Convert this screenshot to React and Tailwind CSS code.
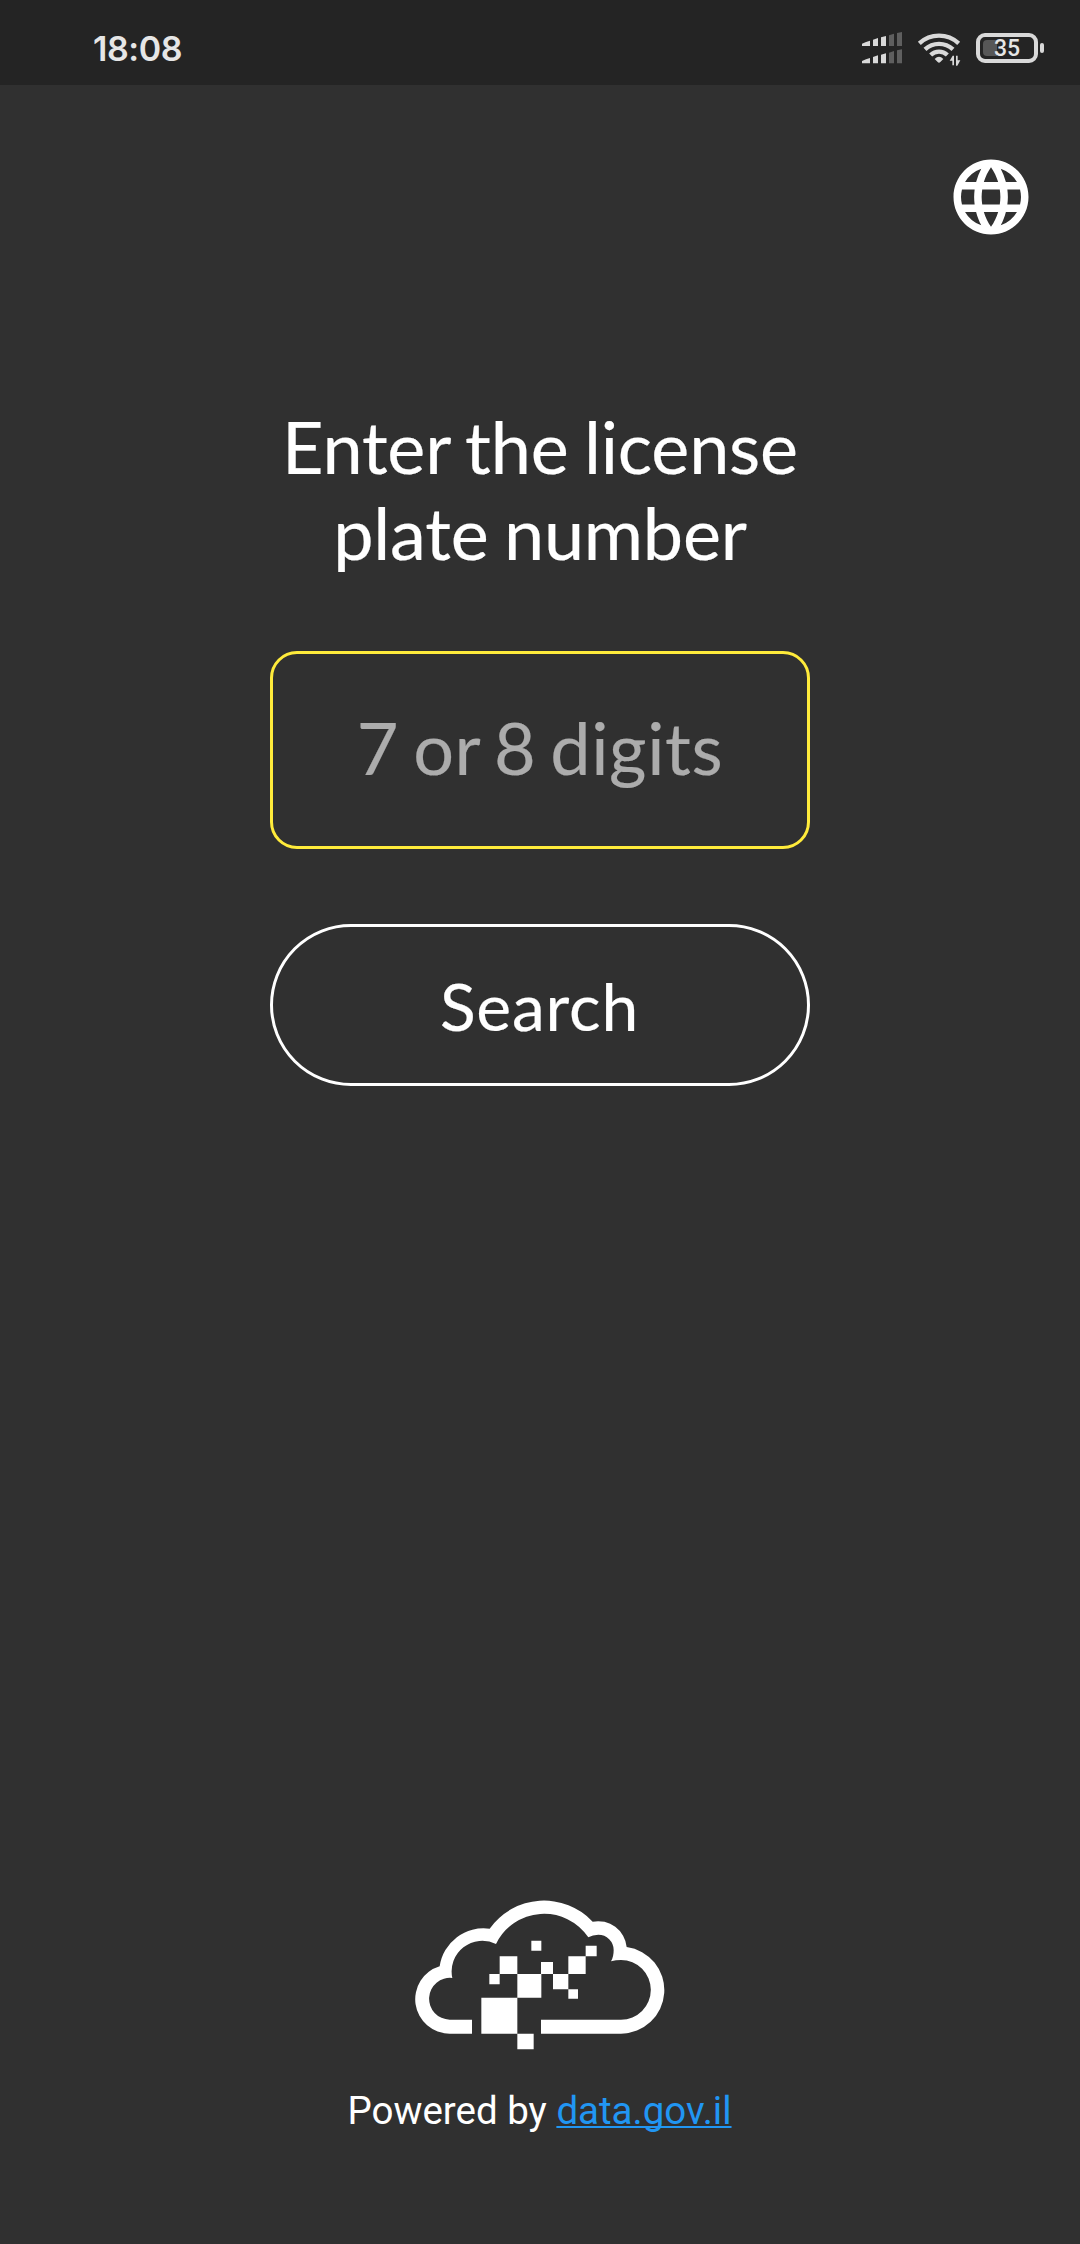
import { MdLanguage } from "react-icons/md";

function SignalIcon() {
  return (
    <svg className="h-8 w-[40px] overflow-visible" viewBox="66 68 120 96" fill="#d9d9d9">
      {[0, 52].map((dy) => (
        <g key={dy} transform={`translate(0 ${dy})`}>
          <path d="M66 110V103Q78 97 90 94V110ZM99 110V91L114 86V110ZM123 110V84L138 80V110Z" />
          <path fill="#5f5f5f" d="M147 110V78L162 73V110ZM171 110V71L186 68V110Z" />
        </g>
      ))}
    </svg>
  );
}

function WifiIcon() {
  return (
    <svg className="h-[34px] w-[43px] overflow-visible" viewBox="234 67 129 102" fill="none" stroke="#d9d9d9" strokeWidth="13">
      <path d="M238 101A87 87 0 0 1 356 101" />
      <path d="M255 119A62 62 0 0 1 339 119" />
      <path d="M272 136A36 36 0 0 1 322 136" />
      <path d="M284 148Q297 134 310 148L301 157Q297 161 293 157Z" fill="#d9d9d9" stroke="none" />
      <path d="M329 153L338 138H342V167H337V153ZM361 152L352 168H348V138H353V152Z" fill="#d9d9d9" stroke="none" />
    </svg>
  );
}

function Battery() {
  return (
    <div className="mt-px flex items-center gap-[2px]">
      <div className="relative flex h-[30px] w-[62px] items-center justify-center rounded-[9px] border-4 border-[#d9d9d9]">
        <div className="absolute left-[3px] top-[3px] h-4 w-[14px] rounded-l-[4px] bg-[#575757]" />
        <span className="relative pt-px font-['Roboto',sans-serif] text-[23px] font-medium leading-none text-[#e6e6e6]">35</span>
      </div>
      <div className="h-[10px] w-1 rounded-[2px] bg-[#d9d9d9]" />
    </div>
  );
}

function CloudLogo() {
  return (
    <svg className="h-[150px] w-[250px]" viewBox="47 62 750 450" fill="#fff">
      <path d="M218 463H151A103.2 103.2 0 0 1 121 261A133 133 0 0 1 271 148A200 200 0 0 1 580 127A86 86 0 0 1 682 203A130.6 130.6 0 0 1 665 463H425V421H665A89.5 89.5 0 0 0 665 242Q650 242 635 246Q643 233 643 212A46 46 0 0 0 597 166Q580 166 567 174A160 160 0 0 0 290 194A92 92 0 0 0 159 296A62.7 62.7 0 1 0 151 421H218Z" />
      <path d="M246 355H354V463H246ZM354 463H403V510H354ZM354 284H426V355H354ZM301 231H354V284H301ZM270 284H301V315H270ZM396 184H426V214H396ZM425 248H461V284H425ZM461 284H507V330H461ZM507 231H559V284H507ZM507 330H536V358H507ZM559 199H592V231H559Z" />
    </svg>
  );
}

export default function App() {
  return (
    <div className="flex h-[2244px] w-[1080px] flex-col bg-[#303030] font-['Lato',sans-serif] text-white">
      <header className="flex h-[85px] shrink-0 items-start justify-between bg-[#242424] pl-[93px] pr-9 pt-[32px]">
        <span className="font-['Inter',sans-serif] text-[34px] font-semibold leading-[34px] tracking-[-0.4px] text-[#e6e6e6]">18:08</span>
        <div className="flex items-start gap-[15px]">
          <div className="flex items-start gap-4">
            <SignalIcon />
            <WifiIcon />
          </div>
          <Battery />
        </div>
      </header>
      <div className="flex justify-end pr-11 pt-[67px]">
        <button aria-label="Language">
          <MdLanguage className="size-[90px]" />
        </button>
      </div>
      <main className="mx-auto mt-[161px] flex w-[540px] flex-col items-center">
        <h1 className="text-center text-[72px] leading-[86px] tracking-[-0.2px] [-webkit-text-stroke:0.2px] [word-spacing:-2.8px]">
          Enter the license
          <br />
          plate number
        </h1>
        <input
          className="mt-[76px] h-[198px] w-full rounded-[27px] border-[3px] border-[#ffeb3b] bg-transparent pb-[6px] text-center text-[72px] tracking-[0.6px] outline-none [-webkit-text-stroke:0.2px] [word-spacing:-5px] placeholder:text-[#acacac]"
          placeholder="7 or 8 digits"
        />
        <button className="mt-[75px] h-[162px] w-full rounded-full border-[3px] border-white pr-px pt-[2px] text-[66px] leading-none tracking-[0.8px] [-webkit-text-stroke:0.2px]">
          Search
        </button>
      </main>
      <footer className="mt-auto flex flex-col items-center pb-[110px]">
        <CloudLogo />
        <p className="mt-[38px] pr-px font-['Roboto',sans-serif] text-[38.5px] leading-[46px]">
          Powered by{" "}
          <a className="text-[#2196f3] underline decoration-2 underline-offset-2 [text-decoration-skip-ink:none]" href="#data">
            data.gov.il
          </a>
        </p>
      </footer>
    </div>
  );
}
